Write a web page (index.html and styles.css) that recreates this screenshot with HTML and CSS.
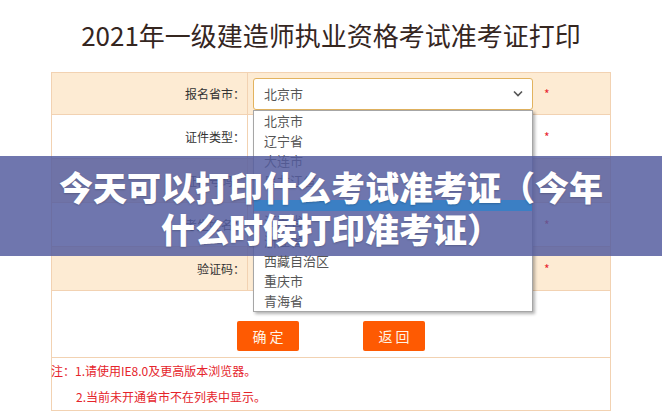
FILE: index.html
```html
<!DOCTYPE html>
<html>
<head>
  <meta charset="utf-8">
  <title>2021年一级建造师执业资格考试准考证打印</title>
  <link rel="stylesheet" href="styles.css">
</head>
<body>
  <h1 class="page-title">2021年一级建造师执业资格考试准考证打印</h1>

  <div class="form-box">
    <div class="form-row peach first">
      <div class="label">报名省市：</div>
      <div class="field">
        <div class="select-wrap">
          <div class="select-box">
            <span>北京市</span>
            <svg width="10" height="7" viewBox="0 0 10 7"><path d="M1 1.5l4 4 4-4" fill="none" stroke="#555" stroke-width="1.6"/></svg>
          </div>
          <ul class="dropdown">
            <li>北京市</li>
            <li>辽宁省</li>
            <li>大连市</li>
            <li>黑龙江省</li>
            <li class="active">上海市</li>
            <li>江苏省</li>
            <li>浙江省</li>
            <li>西藏自治区</li>
            <li>重庆市</li>
            <li>青海省</li>
          </ul>
        </div>
      </div>
      <div class="req">*</div>
    </div>
    <div class="form-row">
      <div class="label">证件类型：</div>
      <div class="field"><div class="input"></div></div>
      <div class="req">*</div>
    </div>
    <div class="form-row peach">
      <div class="label">证件号码：</div>
      <div class="field"><div class="input"></div></div>
      <div class="req">*</div>
    </div>
    <div class="form-row">
      <div class="label">考生姓名：</div>
      <div class="field"><div class="input"></div></div>
      <div class="req">*</div>
    </div>
    <div class="form-row peach">
      <div class="label">验证码：</div>
      <div class="field"><div class="input"></div></div>
      <div class="req">*</div>
    </div>

    <div class="btn-row">
      <button class="btn">确 定</button>
      <button class="btn">返 回</button>
    </div>

    <div class="notes">
      <p>注：1.请使用IE8.0及更高版本浏览器。</p>
      <p class="indent">2.当前未开通省市不在列表中显示。</p>
    </div>
  </div>

  <div class="banner">
    <p class="banner-text">今天可以打印什么考试准考证（今年什么时候打印准考证）</p>
  </div>
</body>
</html>
```

FILE: styles.css
```css
body {
  margin: 0;
  background: #fff;
  font-family: "Noto Sans CJK SC", "Microsoft YaHei", sans-serif;
  color: #333;
}

.page-title {
  margin: 0 0 22px;
  padding-top: 20px;
  font-size: 26px;
  line-height: 30px;
  font-weight: 400;
  text-align: center;
  color: #35261f;
}

.form-box {
  width: 560px;
  margin: 0 auto;
  box-sizing: border-box;
  border: 1px solid #f2d2b2;
  border-bottom: 0;
}

.form-row {
  display: grid;
  grid-template-columns: 196px 288px 1fr;
  height: 44px;
  box-sizing: border-box;
  border-bottom: 1px solid #f2d2b2;
}
.form-row.first {
  height: 42px;
}
.form-row.peach {
  background: #fdebd3;
}

.label {
  display: flex;
  align-items: center;
  justify-content: flex-end;
  padding-right: 2px;
  border-right: 1px solid #f2d2b2;
  font-size: 12px;
  color: #333;
}

.field {
  display: flex;
  align-items: center;
  padding-left: 5px;
}

.req {
  display: flex;
  align-items: center;
  padding-left: 8px;
  font-size: 12px;
  color: #e8262f;
}

.input {
  width: 280px;
  height: 28px;
  box-sizing: border-box;
  border: 1px solid #ccc;
  background: #fff;
}

.select-wrap {
  position: relative;
}

.select-box {
  width: 280px;
  height: 32px;
  box-sizing: border-box;
  display: flex;
  align-items: center;
  justify-content: space-between;
  padding: 0 9px 0 10px;
  border: 1px solid #e2b35f;
  border-radius: 3px;
  background: #fff;
  font-size: 13px;
  color: #555;
}

.dropdown {
  position: absolute;
  top: 100%;
  left: 0;
  width: 280px;
  margin: 0;
  padding: 0;
  list-style: none;
  box-sizing: border-box;
  border: 1px solid #a6a6a6;
  background: #fff;
  box-shadow: 2px 2px 3px rgba(0, 0, 0, 0.3);
}
.dropdown li {
  height: 20px;
  line-height: 20px;
  padding-left: 10px;
  font-size: 13px;
  color: #555;
}
.dropdown li.active {
  position: relative;
  z-index: 1;
  color: transparent;
  background: linear-gradient(transparent 45%, #3b7fc4 45%);
}

.btn-row {
  display: flex;
  justify-content: center;
  gap: 64px;
  height: 67px;
  box-sizing: border-box;
  padding-top: 30px;
  border-bottom: 1px solid #f2d2b2;
}

.btn {
  width: 62px;
  height: 30px;
  border: 0;
  border-radius: 2px;
  background: #fe5a02;
  color: #fff4e6;
  font-family: inherit;
  font-size: 14px;
  cursor: pointer;
}

.notes {
  border-bottom: 1px solid #f2d2b2;
  margin-left: -1px;
}
.notes p {
  margin: 0;
  line-height: 26px;
  font-size: 12px;
  color: #e5242b;
}
.notes .indent {
  padding-left: 25px;
}

.banner {
  position: absolute;
  top: 156px;
  left: 0;
  right: 0;
  height: 100px;
  box-sizing: border-box;
  padding-top: 10px;
  background: rgba(84, 92, 158, 0.84);
}

.banner-text {
  position: relative;
  z-index: 2;
  width: 556px;
  margin: 0 auto;
  font-size: 34px;
  line-height: 42px;
  font-weight: 900;
  text-align: center;
  color: #fff;
  text-shadow: 0 1px 2px rgba(0, 0, 0, 0.2);
}
```
